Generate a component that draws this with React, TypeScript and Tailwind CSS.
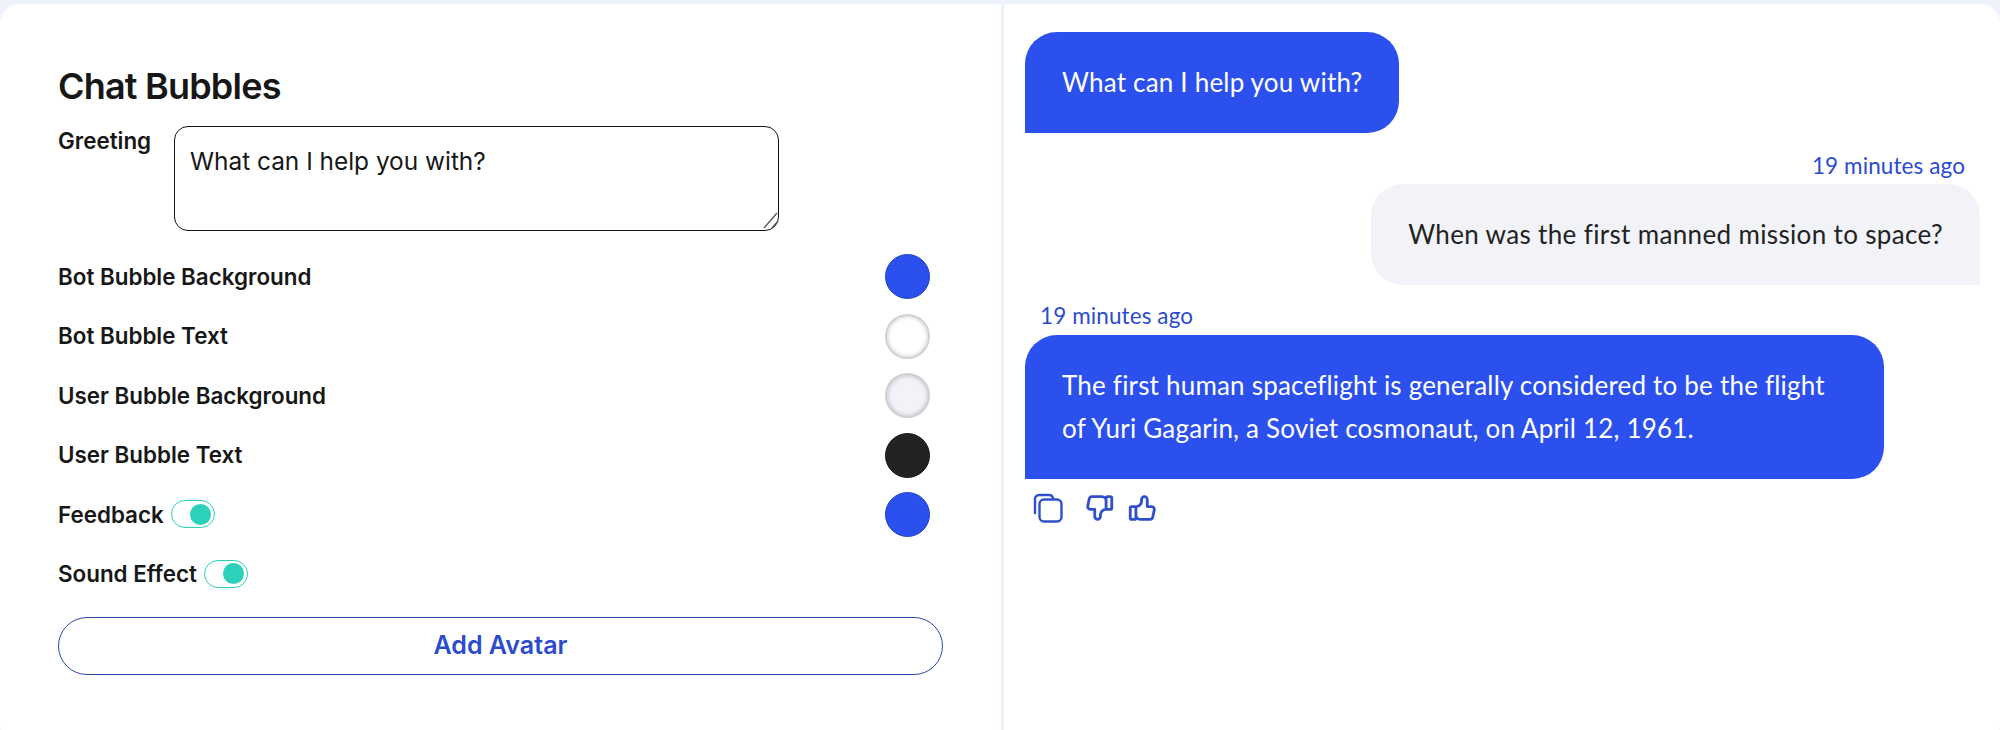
const inter = "font-['Inter',sans-serif]";

function Swatch({ color }: { color: string }) {
  return <span className={`block w-[45px] h-[45px] rounded-full ${color}`} />;
}

function Toggle() {
  return (
    <span className="relative block w-[44px] h-[28px] rounded-full border border-[#2fd0b8] bg-white">
      <span className="absolute right-[3px] top-[2.5px] w-[21px] h-[21px] rounded-full bg-[#2dd1b9]" />
    </span>
  );
}

function Row({ label, swatch, toggle }: { label: string; swatch?: string; toggle?: boolean }) {
  return (
    <div className="flex items-center justify-between h-[45px] pr-[13px]">
      <div className="flex items-center gap-[7px]">
        <span className="text-[22.4px] font-semibold text-[#171717]">{label}</span>
        {toggle && <Toggle />}
      </div>
      {swatch && <Swatch color={swatch} />}
    </div>
  );
}

function Stamp({ right }: { right?: boolean }) {
  return (
    <div className={`text-[22.5px] leading-[30px] tracking-[0.1px] text-[#2b4bcf] ${right ? "text-right pr-[15px]" : "pl-[15px]"}`}>
      19 minutes ago
    </div>
  );
}

function CopyIcon() {
  return (
    <svg width="30" height="30" viewBox="0 0 30 30" fill="none" stroke="currentColor" strokeWidth="2.4" strokeLinecap="round" strokeLinejoin="round">
      <rect x="6.5" y="6.5" width="22" height="22" rx="4.5" />
      <path d="M2 20V6a4 4 0 0 1 4-4h10a4 4 0 0 1 4 3" />
    </svg>
  );
}

function ThumbUp({ flip }: { flip?: boolean }) {
  return (
    <svg width="34" height="34" viewBox="0 0 24 24" fill="none" stroke="currentColor" strokeWidth="2" strokeLinecap="round" strokeLinejoin="round" className={flip ? "-scale-x-100" : ""}>
      {flip ? (
        <path d="M7 13v-8a1 1 0 0 0 -1 -1h-2a1 1 0 0 0 -1 1v7a1 1 0 0 0 1 1h3a4 4 0 0 1 4 4v1a2 2 0 0 0 4 0v-5h3a2 2 0 0 0 2 -2l-1 -5a2 3 0 0 0 -2 -2h-7a3 3 0 0 0 -3 3" />
      ) : (
        <path d="M7 11v8a1 1 0 0 1 -1 1h-2a1 1 0 0 1 -1 -1v-7a1 1 0 0 1 1 -1h3a4 4 0 0 0 4 -4v-1a2 2 0 0 1 4 0v5h3a2 2 0 0 1 2 2l-1 5a2 3 0 0 1 -2 2h-7a3 3 0 0 1 -3 -3" />
      )}
    </svg>
  );
}

export default function App() {
  return (
    <div className="h-[730px] overflow-hidden bg-[#eef2fd] pt-[4px] flex gap-[3px]">
      <section className={`w-[1001px] h-[740px] bg-white rounded-l-[20px] pl-[58px] pt-[60px] ${inter}`}>
        <h1 className="text-[36px] leading-[44px] font-semibold tracking-[-0.8px] text-[#171717]">Chat Bubbles</h1>
        <div className="flex mt-[18px] w-[885px]">
          <label className="w-[116px] pt-[1px] text-[22.4px] leading-[28px] font-semibold text-[#171717]">Greeting</label>
          <div className="relative w-[605px] h-[105px]">
            <textarea
              defaultValue="What can I help you with?"
              className="block w-full h-full resize-none rounded-[14px] border border-[#111] px-[15px] py-[19px] text-[24.4px] leading-[30px] text-[#171717] outline-none"
            />
            <svg width="20" height="20" viewBox="0 0 20 20" className="absolute right-0 bottom-0" fill="none" stroke="#555" strokeWidth="1.3">
              <path d="M18 2 5 17" />
              <path d="M19 10 13 17" />
            </svg>
          </div>
        </div>
        <div className="flex flex-col gap-[14.5px] mt-[23px] w-[885px]">
          <Row label="Bot Bubble Background" swatch="bg-[#2b50ee] border border-[#2444c4]" />
          <Row label="Bot Bubble Text" swatch="bg-white border-2 border-[#d2d2d2] shadow-[inset_0_0_4px_rgba(0,0,0,0.25)]" />
          <Row label="User Bubble Background" swatch="bg-[#f1f3f8] border-2 border-[#cfcfcf] shadow-[inset_0_0_4px_rgba(0,0,0,0.25)]" />
          <Row label="User Bubble Text" swatch="bg-[#222222] border border-[#1a1a1a]" />
          <Row label="Feedback" toggle swatch="bg-[#2b50ee] border border-[#2444c4]" />
          <Row label="Sound Effect" toggle />
        </div>
        <button className="block w-[885px] h-[58px] mt-[20.5px] rounded-full border border-[#2b4ba8] text-[25px] font-semibold text-[#2b4bcf]">
          Add Avatar
        </button>
      </section>

      <section className="flex-1 h-[740px] bg-white rounded-r-[20px] pl-[21px] pr-[20px] pt-[28px] font-['Lato',sans-serif] text-[26px] leading-[43px]">
        <div className="w-fit rounded-[32px] rounded-bl-none bg-[#2b50ee] text-white tracking-[0.2px] px-[37px] py-[29px]">
          What can I help you with?
        </div>
        <div className="mt-[18px]">
          <Stamp right />
        </div>
        <div className="flex justify-end mt-[3px]">
          <div className="rounded-[32px] rounded-br-none bg-[#f1f3f8] text-[#222222] tracking-[0.35px] px-[37px] py-[29px]">
            When was the first manned mission to space?
          </div>
        </div>
        <div className="mt-[16px]">
          <Stamp />
        </div>
        <div className="w-[859px] mt-[4px] rounded-[32px] rounded-bl-none bg-[#2b50ee] text-white tracking-[0.2px] px-[37px] py-[29px]">
          The first human spaceflight is generally considered to be the flight of Yuri Gagarin, a Soviet cosmonaut, on April 12, 1961.
        </div>
        <div className="flex items-center mt-[12px] pl-[8px] text-[#2f50c8]">
          <CopyIcon />
          <span className="ml-[19px]"><ThumbUp flip /></span>
          <span className="ml-[10px]"><ThumbUp /></span>
        </div>
      </section>
    </div>
  );
}
